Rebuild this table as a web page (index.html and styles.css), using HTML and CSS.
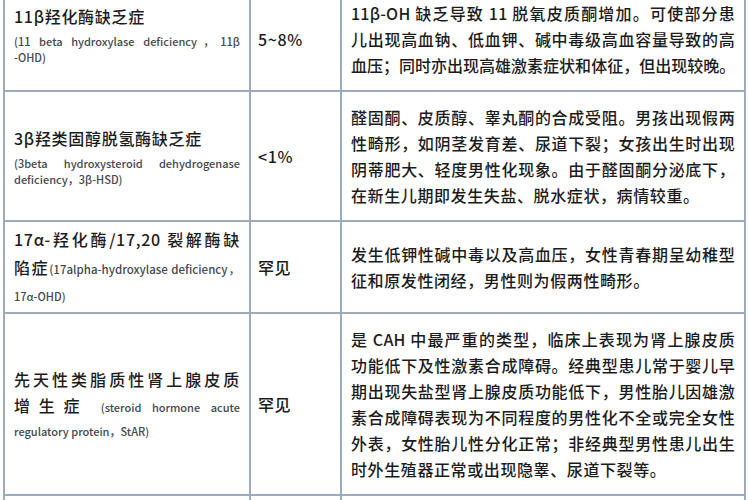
FILE: index.html
```html
<!DOCTYPE html>
<html lang="zh-CN">
<head>
<meta charset="utf-8">
<title>CAH 分型</title>
<link rel="stylesheet" href="styles.css">
</head>
<body>
<table class="cah">
  <colgroup>
    <col class="c-name">
    <col class="c-rate">
    <col class="c-desc">
  </colgroup>
  <tr class="r1">
    <td class="name">
      <div class="title">11β羟化酶缺乏症</div>
      <div class="sub">
        <span class="jl">(11 beta hydroxylase deficiency，11β</span>
        <span class="ln">-OHD)</span>
      </div>
    </td>
    <td class="rate">5~8%</td>
    <td class="desc">
      <span class="jl">11β-OH 缺乏导致 11 脱氧皮质酮增加。可使部分患</span>
      <span class="jl">儿出现高血钠、低血钾、碱中毒级高血容量导致的高</span>
      <span class="jl tight">血压；同时亦出现高雄激素症状和体征，但出现较晚。</span>
    </td>
  </tr>
  <tr class="r2">
    <td class="name">
      <div class="title">3β羟类固醇脱氢酶缺乏症</div>
      <div class="sub">
        <span class="jl">(3beta hydroxysteroid dehydrogenase</span>
        <span class="ln">deficiency，3β-HSD)</span>
      </div>
    </td>
    <td class="rate">&lt;1%</td>
    <td class="desc">
      <span class="jl">醛固酮、皮质醇、睾丸酮的合成受阻。男孩出现假两</span>
      <span class="jl">性畸形，如阴茎发育差、尿道下裂；女孩出生时出现</span>
      <span class="jl">阴蒂肥大、轻度男性化现象。由于醛固酮分泌底下，</span>
      <span class="ln">在新生儿期即发生失盐、脱水症状，病情较重。</span>
    </td>
  </tr>
  <tr class="r3">
    <td class="name">
      <div class="title">
        <span class="jl">17α-羟化酶/17,20 裂解酶缺</span>
        <span class="jl">陷症<span class="sub-in wide">(17alpha-hydroxylase deficiency，</span></span>
        <span class="sub-ln">17α-OHD)</span>
      </div>
    </td>
    <td class="rate">罕见</td>
    <td class="desc">
      <span class="jl">发生低钾性碱中毒以及高血压，女性青春期呈幼稚型</span>
      <span class="ln">征和原发性闭经，男性则为假两性畸形。</span>
    </td>
  </tr>
  <tr class="r4">
    <td class="name">
      <div class="title">
        <span class="jl">先天性类脂质性肾上腺皮质</span>
        <span class="jl">增生症 <span class="sub-in">(steroid hormone acute</span></span>
        <span class="sub-ln">regulatory protein，StAR)</span>
      </div>
    </td>
    <td class="rate">罕见</td>
    <td class="desc">
      <span class="jl">是 CAH 中最严重的类型，临床上表现为肾上腺皮质</span>
      <span class="jl">功能低下及性激素合成障碍。经典型患儿常于婴儿早</span>
      <span class="jl">期出现失盐型肾上腺皮质功能低下，男性胎儿因雄激</span>
      <span class="jl">素合成障碍表现为不同程度的男性化不全或完全女性</span>
      <span class="jl">外表，女性胎儿性分化正常；非经典型男性患儿出生</span>
      <span class="ln">时外生殖器正常或出现隐睾、尿道下裂等。</span>
    </td>
  </tr>
  <tr class="r5">
    <td class="name">&nbsp;</td>
    <td class="rate">&nbsp;</td>
    <td class="desc">&nbsp;</td>
  </tr>
</table>
</body>
</html>
```

FILE: styles.css
```css
html, body {
  margin: 0;
  padding: 0;
  background: #ffffff;
  overflow: hidden;
}

body {
  font-family: "Noto Sans CJK SC", "Noto Sans", sans-serif;
  font-weight: 500;
  color: #1c1c1c;
}

.cah {
  margin: -14px 0 0 3px;
  width: 743px;
  table-layout: fixed;
  border-collapse: collapse;
  border: 2px solid #a0aabd;
}

.c-name { width: 246px; }
.c-rate { width: 91px; }
.c-desc { width: 404px; }

.cah td {
  border: 2px solid #a0aabd;
  vertical-align: middle;
}

.name {
  padding: 6px 9px;
}

.r1 .name {
  padding-bottom: 16px;
}

.r3 .name {
  padding-top: 3px;
  padding-bottom: 3px;
}

.r3 .title .jl {
  line-height: 28px;
}

.r3 .title .sub-ln {
  line-height: 26px;
}

.rate {
  padding: 0 7px;
  font-size: 16px;
  letter-spacing: 0.6px;
}

.desc {
  padding: 12px 9px 12px 9px;
  font-size: 16px;
  line-height: 26px;
  letter-spacing: 0.2px;
}

.jl {
  display: block;
  white-space: nowrap;
  text-align: justify;
  text-align-last: justify;
}

.ln {
  display: block;
  white-space: nowrap;
}

.desc .ln {
  letter-spacing: 0.6px;
}

.desc .tight {
  letter-spacing: -0.2px;
}

.title {
  font-size: 16px;
  line-height: 26px;
  letter-spacing: 0.7px;
}

.sub {
  margin-top: 4px;
  font-size: 11px;
  line-height: 16px;
  color: #44484e;
  letter-spacing: 0;
}

.sub-in {
  font-size: 11px;
  color: #44484e;
  letter-spacing: 0;
}

.sub-in.wide {
  font-size: 11.5px;
}

.sub-ln {
  display: block;
  font-size: 11px;
  line-height: 22px;
  color: #44484e;
  letter-spacing: 0;
}

.r5 td {
  height: 40px;
}
```
